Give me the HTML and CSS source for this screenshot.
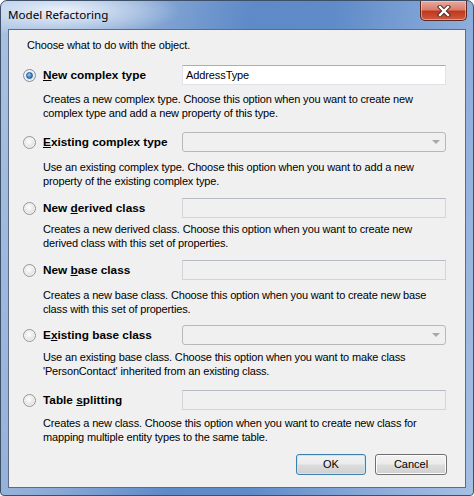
FILE: index.html
```html
<!DOCTYPE html>
<html>
<head>
<meta charset="utf-8">
<link rel="stylesheet" href="styles.css">
</head>
<body>
<div class="window">
  <div class="titlebar">
    <span class="title">Model Refactoring</span>
    <div class="close-btn">
      <svg width="20" height="12" viewBox="0 0 20 12">
        <path d="M6 2 L14 10 M14 2 L6 10" stroke="#4a2420" stroke-width="4.2" stroke-linecap="square"/>
        <path d="M6 2 L14 10 M14 2 L6 10" stroke="#ffffff" stroke-width="2.4" stroke-linecap="square"/>
      </svg>
    </div>
  </div>
  <div class="client">
    <div class="heading">Choose what to do with the object.</div>

    <div class="option">
      <div class="row">
        <span class="radio checked"></span>
        <span class="label"><u>N</u>ew complex type</span>
        <div class="textbox active">AddressType</div>
      </div>
      <div class="desc">Creates a new complex type. Choose this option when you want to create new<br>complex type and add a new property of this type.</div>
    </div>

    <div class="option">
      <div class="row">
        <span class="radio"></span>
        <span class="label"><u>E</u>xisting complex type</span>
        <div class="combo"><span class="arrow"></span></div>
      </div>
      <div class="desc">Use an existing complex type. Choose this option when you want to add a new<br>property of the existing complex type.</div>
    </div>

    <div class="option">
      <div class="row">
        <span class="radio"></span>
        <span class="label">New <u>d</u>erived class</span>
        <div class="textbox"></div>
      </div>
      <div class="desc">Creates a new derived class. Choose this option when you want to create new<br>derived class with this set of properties.</div>
    </div>

    <div class="option">
      <div class="row">
        <span class="radio"></span>
        <span class="label">New <u>b</u>ase class</span>
        <div class="textbox"></div>
      </div>
      <div class="desc">Creates a new base class. Choose this option when you want to create new base<br>class with this set of properties.</div>
    </div>

    <div class="option">
      <div class="row">
        <span class="radio"></span>
        <span class="label">E<u>x</u>isting base class</span>
        <div class="combo"><span class="arrow"></span></div>
      </div>
      <div class="desc">Use an existing base class. Choose this option when you want to make class<br>'PersonContact' inherited from an existing class.</div>
    </div>

    <div class="option">
      <div class="row">
        <span class="radio"></span>
        <span class="label">Table <u>s</u>plitting</span>
        <div class="textbox"></div>
      </div>
      <div class="desc">Creates a new class. Choose this option when you want to create new class for<br>mapping multiple entity types to the same table.</div>
    </div>

    <div class="buttons">
      <div class="btn default">OK</div>
      <div class="btn">Cancel</div>
    </div>
  </div>
</div>
</body>
</html>
```

FILE: styles.css
```css
* { box-sizing: border-box; }
html, body { margin: 0; padding: 0; }
body {
  width: 474px;
  height: 496px;
  background: #ffffff;
  font-family: "Liberation Sans", Arial, sans-serif;
  font-size: 11px;
  color: #000;
}
.window {
  position: relative;
  width: 474px;
  height: 496px;
  border: 1px solid #3e5068;
  border-radius: 7px 7px 4px 4px;
  background:
    radial-gradient(ellipse 120px 26px at 60px 10px, rgba(238,244,252,0.97), rgba(238,244,252,0) 100%),
    linear-gradient(100deg, #a9c1e2 0%, #8aaad6 25%, #5e8ac8 45%, #5f8bc9 60%, #86a8d8 80%, #a6c0e4 100%);
  display: flex;
  flex-direction: column;
  overflow: hidden;
}
.titlebar {
  height: 28px;
  flex: none;
  display: flex;
  align-items: flex-start;
}
.title {
  font-family: "Noto Sans", "Open Sans", sans-serif;
  font-size: 11.6px;
  color: #000;
  margin-left: 7px;
  margin-top: 6px;
  line-height: 16px;
}
.close-btn {
  position: absolute;
  top: 0;
  left: 419px;
  width: 47px;
  height: 20px;
  border: 1px solid #5a2a22;
  border-top: none;
  border-radius: 0 0 5px 5px;
  background: linear-gradient(#e9a99c 0%, #d8806e 45%, #c0391f 55%, #cf5a3e 100%);
  box-shadow: inset 0 0 0 1px rgba(255,220,210,0.5);
  display: flex;
  align-items: center;
  justify-content: center;
}
.client {
  flex: 1;
  margin: 0 7px 7px 7px;
  border: 1px solid #5b6c84;
  background: #f0f0f0;
  padding: 8px 0 0 0;
}
.heading {
  line-height: 14px;
  padding-left: 18px;
  white-space: nowrap;
  letter-spacing: -0.15px;
}
.row {
  display: flex;
  align-items: center;
  height: 20px;
  padding-left: 14px;
}
.radio {
  width: 13px;
  height: 13px;
  border-radius: 50%;
  border: 1px solid #979797;
  background: radial-gradient(circle at 45% 40%, #ffffff 0%, #e8e8e8 50%, #c8c8c8 100%);
  box-shadow: inset 0 0 0 1px #f4f4f4;
  flex: none;
  position: relative;
}
.radio.checked {
  border-color: #7a8fa8;
}
.radio.checked::after {
  content: "";
  position: absolute;
  left: 2px;
  top: 2px;
  width: 7px;
  height: 7px;
  border-radius: 50%;
  background: radial-gradient(circle at 40% 35%, #9fd0f8 0%, #3d86d0 55%, #1b4f94 100%);
  border: 1px solid #2a5a8e;
  box-sizing: border-box;
}
.label {
  width: 139px;
  margin-left: 7px;
  font-weight: bold;
  font-size: 11.8px;
  white-space: nowrap;
  flex: none;
}
.textbox {
  width: 264px;
  height: 20px;
  border: 1px solid #d2d4d8;
  border-top-color: #b7bcc4;
  background: #f0f0f0;
  line-height: 18px;
  padding-left: 3px;
  letter-spacing: -0.1px;
}
.textbox.active {
  background: #ffffff;
  border-color: #dfe3e8;
  border-top-color: #abadb3;
  border-left-color: #e2e3ea;
}
.combo {
  width: 264px;
  height: 20px;
  border: 1px solid #b8b8b8;
  border-radius: 3px;
  background: #f0f0f0;
  position: relative;
}
.arrow {
  position: absolute;
  right: 5px;
  top: 7px;
  width: 0;
  height: 0;
  border-left: 4px solid transparent;
  border-right: 4px solid transparent;
  border-top: 4px solid #a8a8a8;
}
.desc {
  margin-left: 34px;
  line-height: 14px;
  white-space: nowrap;
  letter-spacing: -0.16px;
}
.option:nth-of-type(2) { margin-top: 13px; }
.option:nth-of-type(2) .desc { margin-top: 7px; }
.option:nth-of-type(3) { margin-top: 12px; }
.option:nth-of-type(3) .desc { margin-top: 8px; }
.option:nth-of-type(4) { margin-top: 10px; }
.option:nth-of-type(4) .desc { margin-top: 4px; }
.option:nth-of-type(5) { margin-top: 10px; }
.option:nth-of-type(5) .desc { margin-top: 8px; }
.option:nth-of-type(6) { margin-top: 9px; }
.option:nth-of-type(6) .desc { margin-top: 5px; }
.option:nth-of-type(7) { margin-top: 12px; }
.option:nth-of-type(7) .desc { margin-top: 6px; }
.buttons {
  display: flex;
  justify-content: flex-end;
  gap: 9px;
  margin-top: 10px;
  padding-right: 18px;
}
.btn {
  height: 21px;
  line-height: 19px;
  text-align: center;
  border: 1px solid #707070;
  border-radius: 3px;
  background: linear-gradient(#f2f2f2 0%, #ebebeb 48%, #dddddd 52%, #cfcfcf 100%);
  box-shadow: inset 0 0 0 1px #fcfcfc;
  width: 72px;
}
.btn.default {
  width: 70px;
  border-color: #3c7fb1;
  box-shadow: inset 0 0 0 1px #c6e7f8;
}
```
